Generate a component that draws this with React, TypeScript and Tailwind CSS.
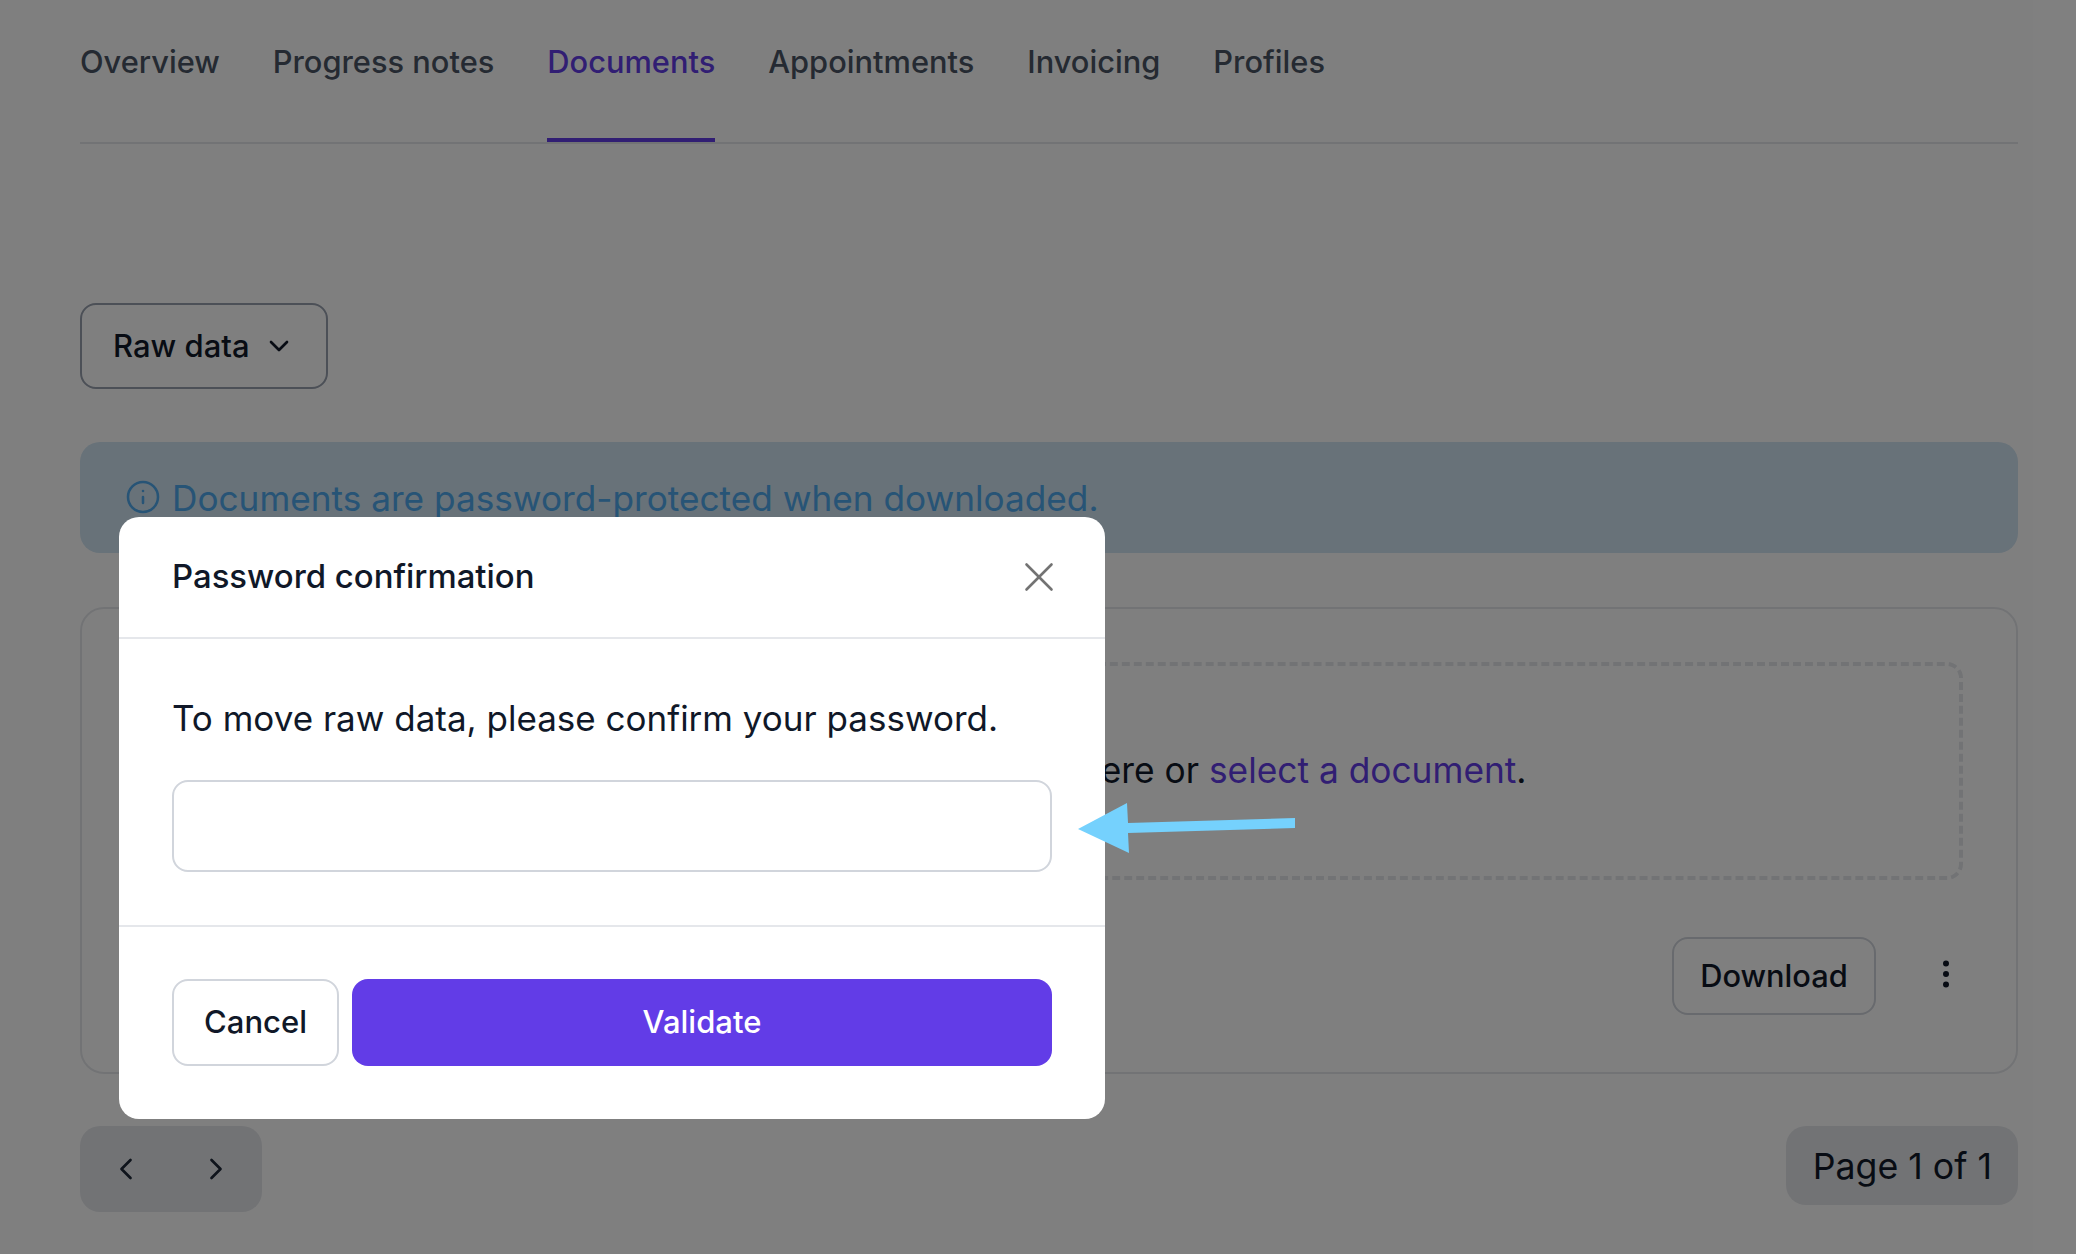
import { ChevronDown, ChevronLeft, ChevronRight, EllipsisVertical, Info, X } from "lucide-react";

const tabs = ["Overview", "Progress notes", "Documents", "Appointments", "Invoicing", "Profiles"];

function Tabs() {
    return (
        <div className="flex h-[144px] gap-[53px] border-b-2 border-gray-200">
            {tabs.map((tab) => (
                <div
                    key={tab}
                    className={
                        tab === "Documents"
                            ? "h-[142px] border-b-4 border-[#623ce7] pt-[40px] text-[30.8px] leading-[44px] font-medium text-[#623ce7]"
                            : "h-[142px] pt-[40px] text-[30.8px] leading-[44px] font-medium text-gray-600"
                    }
                >
                    {tab}
                </div>
            ))}
        </div>
    );
}

function PasswordModal() {
    return (
        <div className="absolute left-[119px] top-[517px] w-[986px] rounded-[20px] bg-white">
            <div className="flex h-[122px] items-center justify-between border-b-2 border-gray-200 px-[53px]">
                <h2 className="text-[32.9px] font-medium text-gray-900">Password confirmation</h2>
                <X size={50} strokeWidth={1.25} className="mr-[-12px] text-neutral-500" />
            </div>
            <div className="border-b-2 border-gray-200 px-[53px] pt-[54px] pb-[53px]">
                <p className="text-[35px] leading-[50px] text-gray-900">To move raw data, please confirm your password.</p>
                <input type="password" className="mt-[37px] block h-[92px] w-full rounded-[16px] border-2 border-gray-300 bg-white" />
            </div>
            <div className="flex gap-[13px] px-[53px] pt-[52px] pb-[53px]">
                <button className="h-[87px] w-[167px] rounded-[16px] border-2 border-gray-300 text-[31px] font-medium text-gray-900">Cancel</button>
                <button className="h-[87px] flex-1 rounded-[16px] bg-[#623ce7] text-[31px] font-medium text-white">Validate</button>
            </div>
        </div>
    );
}

export default function App() {
    return (
        <div className="relative h-[1254px] w-[2076px] overflow-hidden bg-white font-['Inter',sans-serif]">
            <div className="px-[80px] pr-[58px]">
                <Tabs />

                <button className="mt-[159px] flex h-[86px] w-[248px] items-center gap-[13px] rounded-[16px] border-2 border-gray-400 pl-[31px] text-[31px] font-medium text-gray-900">
                    Raw data
                    <ChevronDown size={32} strokeWidth={2} />
                </button>

                <div className="mt-[53px] flex h-[111px] items-center gap-[11px] rounded-[20px] bg-[#d0e4f2] pt-[2px] pl-[45px] text-[35.2px] text-[#4fa8ec]">
                    <Info size={36} strokeWidth={1.7} className="mt-[-3px]" />
                    Documents are password-protected when downloaded.
                </div>

                <div className="mt-[54px] h-[467px] rounded-[24px] border-2 border-gray-200 px-[53px] pt-[53px]">
                    <div className="flex h-[218px] items-center justify-center rounded-[16px] border-4 border-dashed border-gray-200 pr-[3px] text-[35.3px] text-gray-900">
                        <span>
                            Drag and drop your document here or <span className="text-[#623ce7]">select a document</span>.
                        </span>
                    </div>
                    <div className="mt-[57px] flex items-center justify-end gap-[52px]">
                        <button className="h-[78px] w-[204px] rounded-[16px] border-2 border-gray-300 text-[30.8px] font-medium text-gray-900">Download</button>
                        <EllipsisVertical size={36} className="mr-[-1px] mt-[-4px] text-gray-900" />
                    </div>
                </div>

                <div className="mt-[52px] flex items-start justify-between">
                    <div className="flex h-[86px] w-[182px] items-center gap-[54px] rounded-[20px] bg-gray-200 pl-[28px] text-gray-800">
                        <ChevronLeft size={36} strokeWidth={1.8} />
                        <ChevronRight size={36} strokeWidth={1.8} />
                    </div>
                    <div className="flex h-[79px] items-center rounded-[20px] bg-gray-200 pt-[2px] pr-[26px] pl-[27px] text-[35.7px] text-gray-900">Page 1 of 1</div>
                </div>
            </div>

            <div className="absolute inset-0 bg-black/50" />

            <PasswordModal />

            <svg className="absolute left-[1070px] top-[795px]" width="235" height="66" viewBox="1070 795 235 66">
                <path d="M1078 829 L1127 803 L1128 823 L1295 818 L1295 828 L1128 833 L1129 853 Z" fill="#75d1fd" />
            </svg>
        </div>
    );
}
